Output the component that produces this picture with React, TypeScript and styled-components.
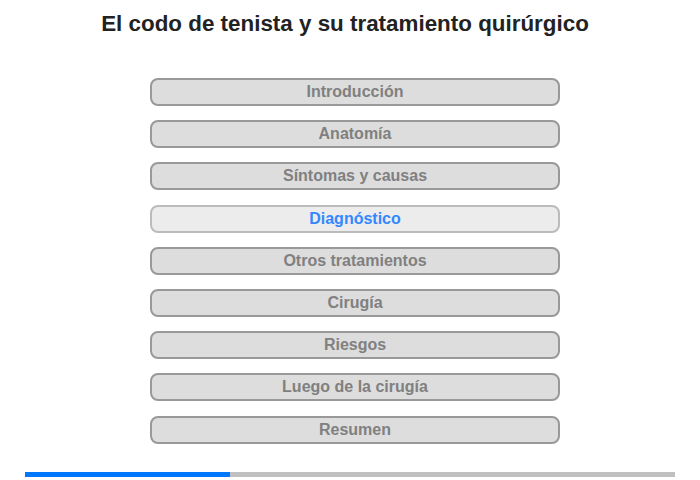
import styled, { createGlobalStyle } from "styled-components";

const GlobalStyle = createGlobalStyle`
  body {
    margin: 0;
    background: #fff;
    font-family: "Liberation Sans", Arial, sans-serif;
  }
`;

const Page = styled.div`
  width: 700px;
  height: 480px;
  display: flex;
  flex-direction: column;
  align-items: center;
`;

const Title = styled.h1`
  font-size: 22.4px;
  font-weight: bold;
  color: #222;
  margin: 11px 0 0 0;
  line-height: 25px;
  padding-right: 10px;
`;

const Menu = styled.div`
  display: flex;
  flex-direction: column;
  gap: 14.2px;
  margin-top: 42px;
  padding-left: 10px;
`;

const MenuButton = styled.button<{ $active?: boolean }>`
  width: 410px;
  height: 28px;
  box-sizing: border-box;
  border: 2px solid ${p => (p.$active ? "#bbb" : "#999")};
  border-radius: 8px;
  background: ${p => (p.$active ? "#ececec" : "#dddddd")};
  color: ${p => (p.$active ? "#3388ff" : "#808080")};
  font-family: "Liberation Sans", Arial, sans-serif;
  font-size: 16px;
  font-weight: bold;
  padding: 0;
  cursor: pointer;
`;

const Progress = styled.div`
  width: 650px;
  height: 5px;
  background: #c0c0c0;
  margin-top: 28px;
  display: flex;
`;

const ProgressFill = styled.div`
  height: 100%;
  background: #0077ff;
`;

const items = [
  "Introducción",
  "Anatomía",
  "Síntomas y causas",
  "Diagnóstico",
  "Otros tratamientos",
  "Cirugía",
  "Riesgos",
  "Luego de la cirugía",
  "Resumen",
];

const App = () => {
  const current = 3;
  return (
    <Page>
      <GlobalStyle />
      <Title>El codo de tenista y su tratamiento quirúrgico</Title>
      <Menu>
        {items.map((label, i) => (
          <MenuButton key={label} type="button" $active={i === current}>
            {label}
          </MenuButton>
        ))}
      </Menu>
      <Progress>
        <ProgressFill style={{ width: `${(205 / 650) * 100}%` }} />
      </Progress>
    </Page>
  );
};

export default App;
